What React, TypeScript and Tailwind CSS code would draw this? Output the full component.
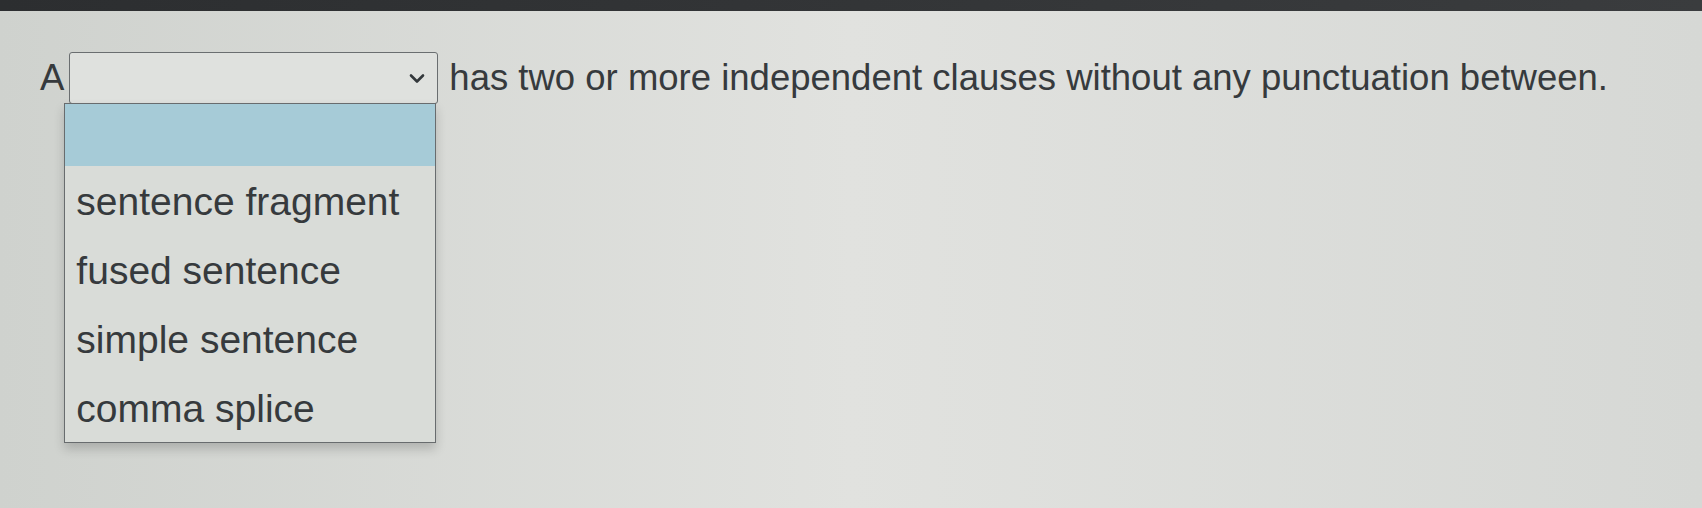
import React from "react";

const options = ["sentence fragment", "fused sentence", "simple sentence", "comma splice"];

const Chevron: React.FC = () => (
  <svg width="16" height="11" viewBox="0 0 16 11" fill="none">
    <path d="M2 2.5 L8 8.5 L14 2.5" stroke="#33383b" strokeWidth="2.6" strokeLinecap="round" strokeLinejoin="round" />
  </svg>
);

const App: React.FC = () => {
  return (
    <div
      className="w-[1702px] h-[508px] overflow-hidden flex flex-col bg-linear-to-r from-[#cfd2ce] via-[#e1e2df] to-[#d6d8d5] text-[#363a3d]"
      style={{ fontFamily: '"Liberation Sans", Arial, sans-serif' }}
    >
      {/* screen bezel */}
      <div className="h-[11px] shrink-0 bg-linear-to-r from-[#2c2e30] to-[#3a3c3e]" />

      <div className="flex items-center pl-[40px] pt-[41px] text-[36.5px] leading-none">
        <span className="mr-[5px]">A</span>

        <div className="relative">
          <div className="w-[369px] h-[52px] border-[1.5px] border-[#6a6e70] rounded-[3px] flex items-center justify-end pr-[12px] bg-[#dfe1de]">
            <Chevron />
          </div>

          {/* open options list */}
          <div className="absolute left-[-5px] top-[51px] w-[372px] border-[1.5px] border-[#686c6e] bg-[#d9dcd8] shadow-[0_6px_10px_rgba(0,0,0,0.18)] z-10">
            <div className="h-[62px] bg-[#a6cbd7]" />
            {options.map((o) => (
              <div key={o} className="h-[69px] flex items-center pl-[11px] pt-[2px] text-[39px]">
                {o}
              </div>
            ))}
          </div>
        </div>

        <span className="ml-[11px] whitespace-nowrap">
          has two or more independent clauses without any punctuation between.
        </span>
      </div>
    </div>
  );
};

export default App;
